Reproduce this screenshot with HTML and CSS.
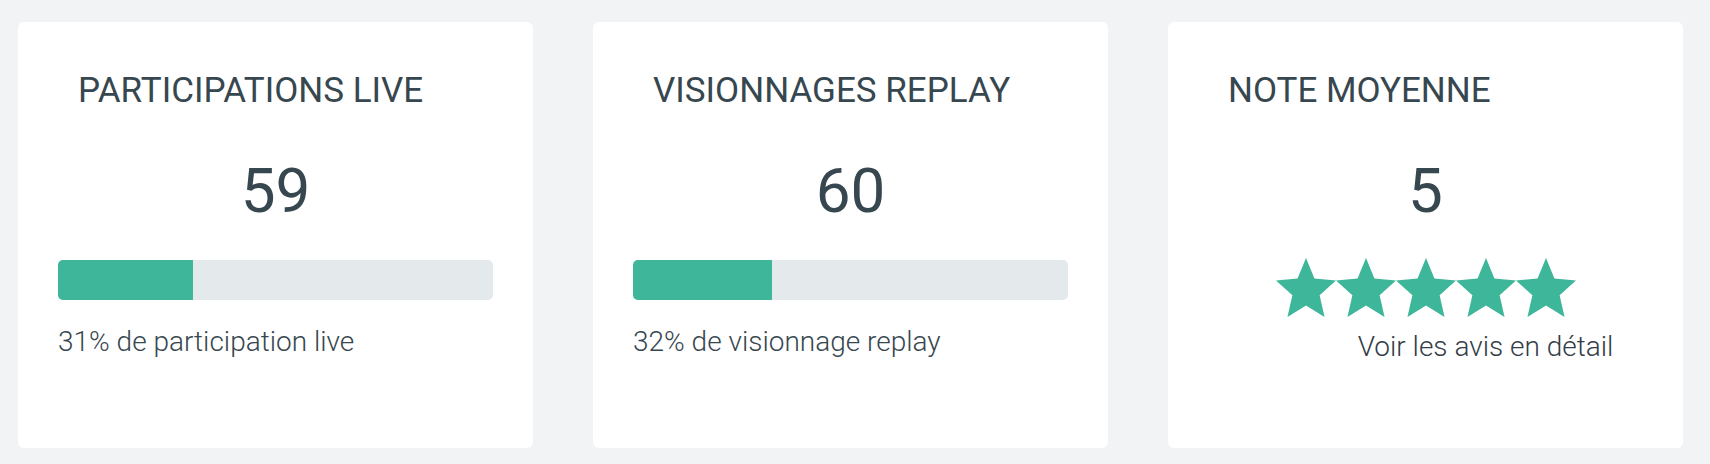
FILE: index.html
```html
<!DOCTYPE html>
<html>

<head>
    <title>Statistiques</title>
    <link rel="stylesheet" href="styles.css">
</head>

<body>
    <div class="stats">
        <!-- Live participation -->
        <div class="card">
            <h3 class="card-title">PARTICIPATIONS LIVE</h3>
            <div class="card-value">59</div>
            <div class="progress">
                <div class="progress-fill" style="width: 31%;"></div>
            </div>
            <p class="card-text">31% de participation live</p>
        </div>

        <!-- Replay views -->
        <div class="card">
            <h3 class="card-title">VISIONNAGES REPLAY</h3>
            <div class="card-value">60</div>
            <div class="progress">
                <div class="progress-fill" style="width: 32%;"></div>
            </div>
            <p class="card-text">32% de visionnage replay</p>
        </div>

        <!-- Average rating -->
        <div class="card">
            <h3 class="card-title">NOTE MOYENNE</h3>
            <div class="card-value">5</div>
            <div class="stars">
                <svg class="star" viewBox="2 2 20 19" preserveAspectRatio="none"><path d="M12 17.27L18.18 21l-1.64-7.03L22 9.24l-7.19-.61L12 2 9.19 8.63 2 9.24l5.46 4.73L5.82 21z"/></svg>
                <svg class="star" viewBox="2 2 20 19" preserveAspectRatio="none"><path d="M12 17.27L18.18 21l-1.64-7.03L22 9.24l-7.19-.61L12 2 9.19 8.63 2 9.24l5.46 4.73L5.82 21z"/></svg>
                <svg class="star" viewBox="2 2 20 19" preserveAspectRatio="none"><path d="M12 17.27L18.18 21l-1.64-7.03L22 9.24l-7.19-.61L12 2 9.19 8.63 2 9.24l5.46 4.73L5.82 21z"/></svg>
                <svg class="star" viewBox="2 2 20 19" preserveAspectRatio="none"><path d="M12 17.27L18.18 21l-1.64-7.03L22 9.24l-7.19-.61L12 2 9.19 8.63 2 9.24l5.46 4.73L5.82 21z"/></svg>
                <svg class="star" viewBox="2 2 20 19" preserveAspectRatio="none"><path d="M12 17.27L18.18 21l-1.64-7.03L22 9.24l-7.19-.61L12 2 9.19 8.63 2 9.24l5.46 4.73L5.82 21z"/></svg>
            </div>
            <a class="card-link" href="#">Voir les avis en détail</a>
        </div>
    </div>
</body>

</html>
```

FILE: styles.css
```css
/* Page */
body {
    margin: 0;
    background-color: #f2f3f5;
    font-family: Roboto, "Liberation Sans", sans-serif;
    color: #37474f;
}

/* Row of stat cards */
.stats {
    display: grid;
    grid-template-columns: repeat(3, 515px);
    gap: 60px;
    padding: 22px 27px 16px 18px;
}

.card {
    height: 426px;
    box-sizing: border-box;
    padding: 48px 40px 0;
    background-color: #fff;
    border-radius: 6px;
}

.card-title {
    margin: 0 0 0 20px;
    font-size: 35px;
    font-weight: 400;
    line-height: 41px;
}

.card-value {
    margin-top: 43px;
    font-size: 62px;
    line-height: 74px;
    text-align: center;
}

/* Progress bar */
.progress {
    height: 40px;
    margin-top: 32px;
    background-color: #e4e9ec;
    border-radius: 5px;
    overflow: hidden;
}

.progress-fill {
    height: 100%;
    background-color: #3db69a;
}

.card-text {
    margin: 26px 0 0;
    font-size: 28px;
    font-weight: 300;
    line-height: 32px;
}

/* Rating stars */
.stars {
    display: flex;
    justify-content: center;
    margin-top: 30px;
}

.star {
    display: block;
    width: 60px;
    height: 59px;
    fill: #3db69a;
}

.card-link {
    display: block;
    margin-top: 14px;
    padding-left: 120px;
    font-size: 28px;
    font-weight: 300;
    line-height: 32px;
    text-align: center;
    color: #333d47;
    text-decoration: none;
}
```
